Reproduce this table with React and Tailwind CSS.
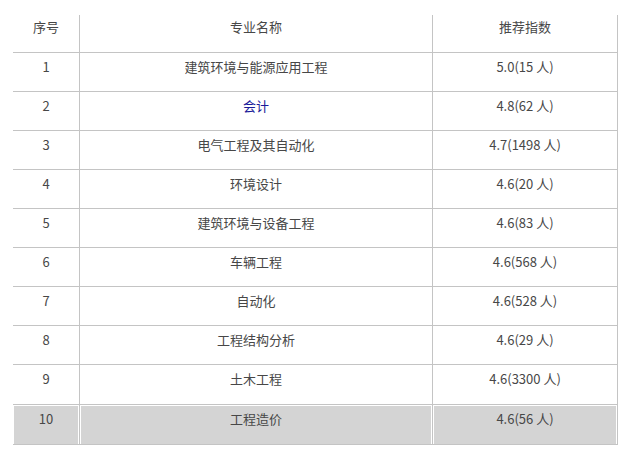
const rows = [
  ["1", "建筑环境与能源应用工程", "5.0(15 人)"],
  ["2", "会计", "4.8(62 人)", true],
  ["3", "电气工程及其自动化", "4.7(1498 人)"],
  ["4", "环境设计", "4.6(20 人)"],
  ["5", "建筑环境与设备工程", "4.6(83 人)"],
  ["6", "车辆工程", "4.6(568 人)"],
  ["7", "自动化", "4.6(528 人)"],
  ["8", "工程结构分析", "4.6(29 人)"],
  ["9", "土木工程", "4.6(3300 人)"],
  ["10", "工程造价", "4.6(56 人)"],
];

export default function App() {
  return (
    <div
      className="w-[625px] h-[456px] bg-white text-[13px] text-[#474747]"
      style={{ fontFamily: '"Microsoft YaHei", "Noto Sans CJK SC", "Noto Sans", sans-serif' }}
    >
      <div className="pt-[15px] pl-[13px]">
        <div className="w-[605px] flex flex-col">
          <div className="flex h-[38px] border-b border-[#c4c4c4] leading-[20px]">
            <div className="w-[67px] border-r border-[#c4c4c4] text-center pt-[2px]">序号</div>
            <div className="w-[353px] border-r border-[#c4c4c4] text-center pt-[2px]">专业名称</div>
            <div className="flex-1 border-r border-[#c4c4c4] text-center pt-[2px]">推荐指数</div>
          </div>
          {rows.map((r, i) => {
            const gray = i === 9;
            const h = i >= 8 ? "h-[40px]" : "h-[39px]";
            const cell = gray
              ? "bg-[#d4d4d4] shadow-[inset_1px_1px_0_#ffffff,inset_-1px_0_0_#ffffff]"
              : "";
            return (
              <div key={i} className={`flex ${h} border-b border-[#c4c4c4] leading-[20px]`}>
                <div className={`w-[67px] border-r border-[#c4c4c4] text-center pt-[4px] ${cell}`}>{r[0]}</div>
                <div className={`w-[353px] border-r border-[#c4c4c4] text-center pt-[4px] ${cell}`}>
                  <span className={r[3] ? "text-[#1a1a9a]" : ""}>{r[1]}</span>
                </div>
                <div className={`flex-1 border-r border-[#c4c4c4] text-center pt-[4px] ${cell}`}>{r[2]}</div>
              </div>
            );
          })}
        </div>
      </div>
    </div>
  );
}
